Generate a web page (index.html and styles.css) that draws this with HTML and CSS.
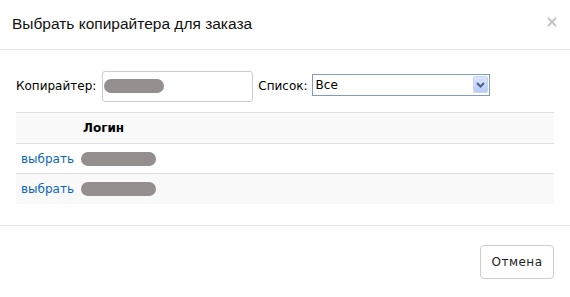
FILE: index.html
```html
<!DOCTYPE html>
<html lang="ru">
<head>
<meta charset="utf-8">
<title>Выбрать копирайтера</title>
<link rel="stylesheet" href="styles.css">
</head>
<body>
<div class="modal">
  <div class="modal-header">
    <h3 class="modal-title">Выбрать копирайтера для заказа</h3>
    <span class="close" aria-label="Закрыть">
      <svg width="10" height="10" viewBox="0 0 10 10"><path d="M1 1L9 9M9 1L1 9" stroke="#c4c4c4" stroke-width="2" fill="none"/></svg>
    </span>
  </div>
  <div class="modal-body">
    <div class="filters">
      <label class="lbl">Копирайтер:</label>
      <div class="input"><span class="blob blob-sm"></span></div>
      <label class="lbl lbl-list">Список:</label>
      <div class="select">
        <span class="select-value">Все</span>
        <span class="select-btn">
          <svg width="9" height="6" viewBox="0 0 9 6"><path d="M1 1L4.5 4.5L8 1" stroke="#4d6185" stroke-width="2" fill="none"/></svg>
        </span>
      </div>
    </div>
    <table class="grid">
      <thead>
        <tr><th class="c1"></th><th class="c2">Логин</th></tr>
      </thead>
      <tbody>
        <tr><td class="c1"><a href="#">выбрать</a></td><td class="c2"><span class="blob blob-lg"></span></td></tr>
        <tr class="alt"><td class="c1"><a href="#">выбрать</a></td><td class="c2"><span class="blob blob-lg"></span></td></tr>
      </tbody>
    </table>
  </div>
  <div class="modal-footer">
    <button class="btn">Отмена</button>
  </div>
</div>
</body>
</html>
```
FILE: styles.css
```css
html, body {
  margin: 0;
  padding: 0;
  background: #fff;
}
body {
  font-family: "DejaVu Sans", Verdana, sans-serif;
  font-size: 12px;
  color: #000;
}
.modal {
  width: 570px;
}
.modal-header {
  height: 49px;
  border-bottom: 1px solid #e5e5e5;
  display: flex;
  align-items: center;
  justify-content: space-between;
  padding: 0 12px 0 12px;
}
.modal-title {
  margin: 0;
  font-family: "Liberation Sans", Arial, sans-serif;
  font-weight: normal;
  font-size: 15.5px;
  color: #111;
  position: relative;
  top: -1px;
}
.close {
  display: flex;
  margin-right: 1px;
  position: relative;
  top: -3px;
}
.modal-body {
  padding: 21px 16px 21px 16px;
}
.filters {
  display: flex;
  align-items: center;
  height: 31px;
  margin-bottom: 10px;
}
.lbl {
  margin-right: 6px;
  position: relative;
  top: -1px;
}
.lbl-list {
  margin-left: 5px;
  margin-right: 4px;
}
.input {
  width: 148px;
  height: 29px;
  border: 1px solid #ccc;
  border-radius: 3px;
  display: flex;
  align-items: center;
  padding-left: 1px;
  box-sizing: content-box;
}
.blob {
  display: block;
  background: #958e8e;
  border-radius: 8px;
}
.blob-sm {
  width: 60px;
  height: 14px;
  position: relative;
  top: -1px;
}
.blob-lg {
  width: 75px;
  height: 14px;
}
.select {
  width: 176px;
  height: 20px;
  border: 1px solid #7f9db9;
  display: flex;
  align-items: center;
  justify-content: space-between;
  position: relative;
  top: -2px;
}
.select-value {
  padding-left: 3px;
}
.select-btn {
  width: 15px;
  height: 17px;
  margin-right: 1px;
  border-radius: 2px;
  background: linear-gradient(#dbe5fd, #b9cbf6);
  border: 1px solid #c6d3f5;
  box-sizing: border-box;
  display: flex;
  align-items: center;
  justify-content: center;
}
.grid {
  width: 100%;
  border-collapse: collapse;
}
.grid th, .grid td {
  border-top: 1px solid #dddddd;
  height: 30px;
  box-sizing: border-box;
  padding: 0 5px;
  line-height: 14px;
  text-align: left;
  vertical-align: middle;
}
.grid th {
  height: 31px;
  font-weight: bold;
}
.grid thead tr {
  background: #f9f9f9;
}
.grid th.c2 {
  padding-left: 7px;
}
.grid .c1 {
  width: 1px;
  padding-right: 2px;
  white-space: nowrap;
}
.grid tr.alt {
  background: #f9f9f9;
}
.grid a {
  color: #0a66b8;
  text-decoration: none;
}
.modal-footer {
  border-top: 1px solid #e5e5e5;
  padding: 19px 16px 18px 16px;
  display: flex;
  justify-content: flex-end;
}
.btn {
  width: 74px;
  height: 34px;
  border: 1px solid #ccc;
  border-radius: 4px;
  background: #fff;
  font-family: "DejaVu Sans", Verdana, sans-serif;
  font-size: 12px;
  letter-spacing: 0.5px;
  color: #222;
  padding: 0;
}
```
